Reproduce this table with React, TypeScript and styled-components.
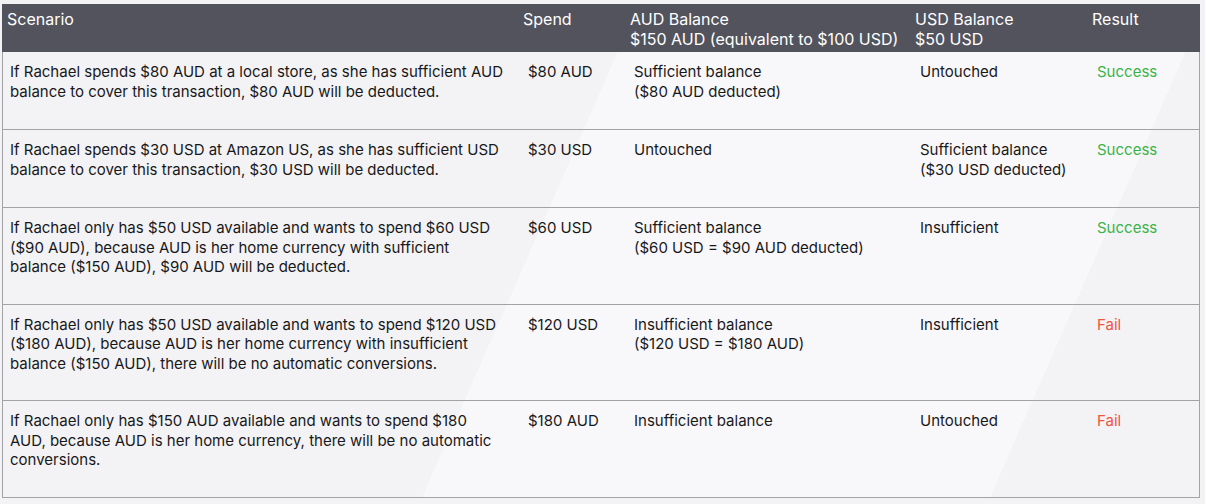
import styled, { createGlobalStyle } from 'styled-components';

const GlobalStyle = createGlobalStyle`
  body {
    margin: 0;
    background: #f3f3f5;
    font-family: Inter, 'Liberation Sans', Arial, sans-serif;
    color: #18181a;
  }
`;

const Table = styled.div`
  width: 1198px;
  margin: 4px 0 0 2px;
  background: linear-gradient(
    113.7deg,
    #f3f3f5 0,
    #f3f3f5 583px,
    #f8f8fa 583px,
    #f8f8fa 1103px,
    #f3f3f5 1103px
  );
`;

const HeaderRow = styled.div`
  display: grid;
  grid-template-columns: 516px 107px 285px 177px 113px;
  background: #53535d;
  color: #ffffff;
`;

const HeaderCell = styled.div`
  padding: 6px 5px 3px;
  font-size: 16px;
  line-height: 19.5px;
  white-space: nowrap;
`;

const Row = styled.div`
  box-sizing: border-box;
  min-height: 78px;
  display: grid;
  grid-template-columns: 515px 106px 286px 177px 112px;
  border: 1px solid #a2a2a7;
  border-top: none;
`;

const Cell = styled.div<{ $tone?: 'ok' | 'bad' }>`
  padding: 10px 8px 27px 10px;
  font-size: 15px;
  line-height: 19.5px;
  white-space: nowrap;
  color: ${(p) => (p.$tone === 'ok' ? '#38b449' : p.$tone === 'bad' ? '#f2533c' : 'inherit')};

  &:first-child {
    padding-left: 7px;
  }
`;

type Scenario = {
  text: string[];
  spend: string;
  aud: string[];
  usd: string[];
  ok: boolean;
};

const rows: Scenario[] = [
  {
    text: [
      'If Rachael spends $80 AUD at a local store, as she has sufficient AUD',
      'balance to cover this transaction, $80 AUD will be deducted.',
    ],
    spend: '$80 AUD',
    aud: ['Sufficient balance', '($80 AUD deducted)'],
    usd: ['Untouched'],
    ok: true,
  },
  {
    text: [
      'If Rachael spends $30 USD at Amazon US, as she has sufficient USD',
      'balance to cover this transaction, $30 USD will be deducted.',
    ],
    spend: '$30 USD',
    aud: ['Untouched'],
    usd: ['Sufficient balance', '($30 USD deducted)'],
    ok: true,
  },
  {
    text: [
      'If Rachael only has $50 USD available and wants to spend $60 USD',
      '($90 AUD), because AUD is her home currency with sufficient',
      'balance ($150 AUD), $90 AUD will be deducted.',
    ],
    spend: '$60 USD',
    aud: ['Sufficient balance', '($60 USD = $90 AUD deducted)'],
    usd: ['Insufficient'],
    ok: true,
  },
  {
    text: [
      'If Rachael only has $50 USD available and wants to spend $120 USD',
      '($180 AUD), because AUD is her home currency with insufficient',
      'balance ($150 AUD), there will be no automatic conversions.',
    ],
    spend: '$120 USD',
    aud: ['Insufficient balance', '($120 USD = $180 AUD)'],
    usd: ['Insufficient'],
    ok: false,
  },
  {
    text: [
      'If Rachael only has $150 AUD available and wants to spend $180',
      'AUD, because AUD is her home currency, there will be no automatic',
      'conversions.',
    ],
    spend: '$180 AUD',
    aud: ['Insufficient balance'],
    usd: ['Untouched'],
    ok: false,
  },
];

const Lines = ({ lines }: { lines: string[] }) => (
  <>
    {lines.map((l, i) => (
      <div key={i}>{l}</div>
    ))}
  </>
);

const App = () => (
  <>
    <GlobalStyle />
    <Table>
      <HeaderRow>
        <HeaderCell>Scenario</HeaderCell>
        <HeaderCell>Spend</HeaderCell>
        <HeaderCell>
          <Lines lines={['AUD Balance', '$150 AUD (equivalent to $100 USD)']} />
        </HeaderCell>
        <HeaderCell>
          <Lines lines={['USD Balance', '$50 USD']} />
        </HeaderCell>
        <HeaderCell>Result</HeaderCell>
      </HeaderRow>
      {rows.map((r, i) => (
        <Row key={i}>
          <Cell>
            <Lines lines={r.text} />
          </Cell>
          <Cell>{r.spend}</Cell>
          <Cell>
            <Lines lines={r.aud} />
          </Cell>
          <Cell>
            <Lines lines={r.usd} />
          </Cell>
          <Cell $tone={r.ok ? 'ok' : 'bad'}>{r.ok ? 'Success' : 'Fail'}</Cell>
        </Row>
      ))}
    </Table>
  </>
);

export default App;
